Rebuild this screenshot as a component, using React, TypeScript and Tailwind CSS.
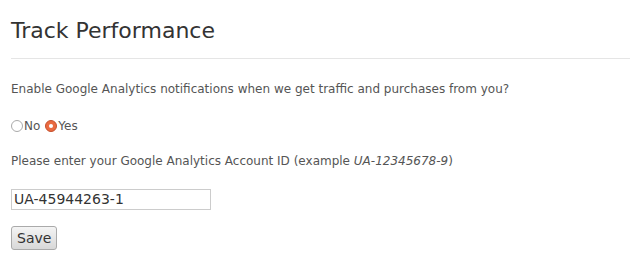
import { useState } from "react";

export default function App() {
  const [enabled, setEnabled] = useState(true);
  const [accountId, setAccountId] = useState("UA-45944263-1");

  return (
    <div className="min-h-screen bg-white pl-[11px] pr-[7px] pt-[16px] font-['DejaVu_Sans',sans-serif] text-[#555]">
      <h2 className="border-b border-[#e5e5e5] pb-[12px] text-[22px] leading-[30px] text-[#333]">
        Track Performance
      </h2>

      <p className="mt-[21px] text-[12px] leading-[18px]">
        Enable Google Analytics notifications when we get traffic and purchases from you?
      </p>

      <div className="mt-[19px] flex items-center text-[12px] leading-[18px]">
        <label className="flex cursor-pointer items-center" onClick={() => setEnabled(false)}>
          <span
            className={
              enabled
                ? "mr-px inline-block h-[12px] w-[12px] rounded-full border border-[#aaa] bg-white"
                : "mr-px flex h-[12px] w-[12px] items-center justify-center rounded-full border border-[#c4502d] bg-[#ea6a40]"
            }
          >
            {!enabled && <span className="h-[4px] w-[4px] rounded-full bg-white" />}
          </span>
          No
        </label>
        <label className="ml-[5px] flex cursor-pointer items-center" onClick={() => setEnabled(true)}>
          <span
            className={
              enabled
                ? "mr-px flex h-[12px] w-[12px] items-center justify-center rounded-full border border-[#c4502d] bg-[#ea6a40]"
                : "mr-px inline-block h-[12px] w-[12px] rounded-full border border-[#aaa] bg-white"
            }
          >
            {enabled && <span className="h-[4px] w-[4px] rounded-full bg-white" />}
          </span>
          Yes
        </label>
      </div>

      <p className="mt-[17px] text-[12px] leading-[18px]">
        Please enter your Google Analytics Account ID (example <em>UA-12345678-9</em>)
      </p>

      <input
        value={accountId}
        onChange={(e) => setAccountId(e.target.value)}
        className="mt-[19px] block h-[21px] w-[200px] border border-[#ccc] px-[2px] text-[14px] text-[#333] outline-none"
      />

      <button className="mt-[16px] h-[24px] rounded-[3px] border border-[#aaa] bg-gradient-to-b from-[#f4f4f4] to-[#d8d8d8] px-[5px] text-[14px] text-[#333]">
        Save
      </button>
    </div>
  );
}
